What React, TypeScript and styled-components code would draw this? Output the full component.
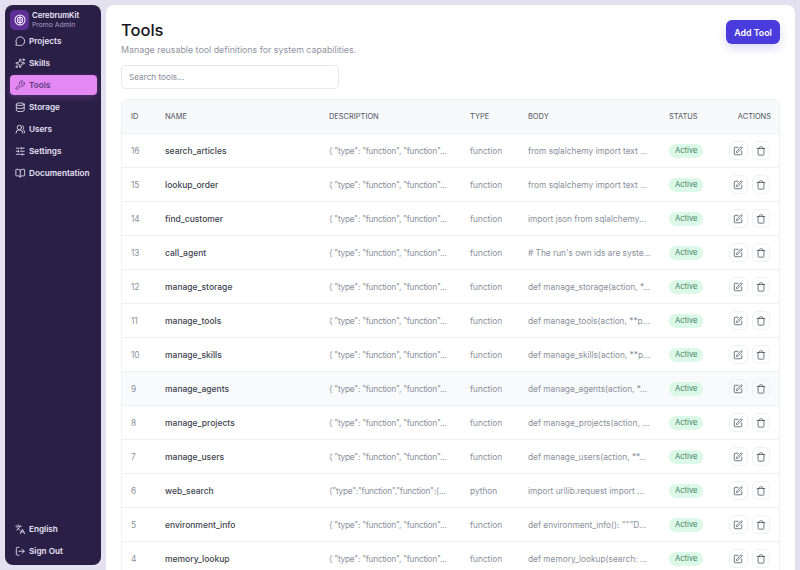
import React from 'react';
import styled, { createGlobalStyle } from 'styled-components';
import { MessageCircle, Sparkles, Wrench, Database, UsersRound, SlidersHorizontal, BookOpen, Languages, LogOut, SquarePen, Trash } from 'lucide-react';

const Global = createGlobalStyle`
  html, body { margin: 0; padding: 0; height: 570px; overflow: hidden; background: #e3e0f0; font-family: Inter, "Liberation Sans", sans-serif; }
  * { box-sizing: border-box; }
`;
const Shell = styled.div`display: flex; gap: 5px; padding: 5px; height: 570px; overflow: hidden;`;
const Sidebar = styled.aside`width: 96px; flex: none; height: 560px; background: #2a1f47; border-radius: 8px; padding: 5px 4px 4px 5px; display: flex; flex-direction: column;`;
const Brand = styled.div`display: flex; align-items: center; gap: 3px; height: 20px; margin-bottom: 1px;`;
const Logo = styled.div`width: 19px; height: 20px; border-radius: 5px; background: #5f2d96; color: #f3ecff; display: flex; align-items: center; justify-content: center;`;
const BrandText = styled.div`display: flex; flex-direction: column; line-height: 9px;`;
const BrandName = styled.span`font-size: 7.7px; font-weight: 600; color: #ece7f7;`;
const BrandSub = styled.span`font-size: 6.8px; color: #a99fc4;`;
const Nav = styled.nav`display: flex; flex-direction: column; gap: 2px;`;
const NavItem = styled.div<{ $active?: boolean }>`
  height: 20px; display: flex; align-items: center; gap: 3.5px; padding-left: 5px; border-radius: 4px; font-size: 8.2px; font-weight: 600;
  color: ${p => (p.$active ? '#5b3a78' : '#e6e1f2')};
  background: ${p => (p.$active ? '#e488f3' : 'transparent')};
  box-shadow: ${p => (p.$active ? '0 2px 6px rgba(227,133,240,.22)' : 'none')};
`;
const Spacer = styled.div`flex: 1;`;
const Main = styled.main`flex: 1; min-width: 0; height: 580px; background: #fff; border-radius: 8px 8px 0 0; padding: 15px 15px 0;`;
const Header = styled.div`display: flex; justify-content: space-between; align-items: flex-start;`;
const Title = styled.h1`margin: 0; font-size: 16.5px; line-height: 20px; font-weight: 500; color: #14141a;`;
const Subtitle = styled.p`margin: 3px 0 0; font-size: 8.85px; line-height: 13px; color: #8f94a0;`;
const AddButton = styled.button`width: 54px; height: 24px; border: 0; border-radius: 6px; background: #4a3bdc; color: #fff; font: 600 8.8px Inter, sans-serif; box-shadow: 0 4px 10px rgba(74,59,220,.2); padding: 0;`;
const Search = styled.input`display: block; width: 218px; height: 24px; margin-top: 9px; padding: 0 7px; border: 1px solid #e6e8ec; border-radius: 5px; font: 8.2px Inter, sans-serif; outline: none; &::placeholder { color: #868b96; }`;
const TableWrap = styled.div`margin-top: 10px; border: 1px solid #f0f1f4; border-radius: 6px 6px 0 0; overflow: hidden;`;
const Table = styled.table`width: 100%; border-collapse: collapse; table-layout: fixed;`;
const Th = styled.th<{ $w: number; $right?: boolean }>`
  width: ${p => p.$w}px; height: 33px; background: #f8f9fb; padding: 0 0 0 9px; font-size: 7.45px; font-weight: 400; color: #4f5663;
  text-align: ${p => (p.$right ? 'right' : 'left')}; padding-right: ${p => (p.$right ? '10px' : '0')};
`;
const Tr = styled.tr<{ $hover?: boolean }>`background: ${p => (p.$hover ? '#f9fafb' : '#fff')};`;
const Td = styled.td`height: 34px; border-top: 1px solid #eef0f3; padding: 1px 0 0 9px; font-size: 8.3px; color: #8b909b; white-space: nowrap; overflow: hidden;`;
const NameCell = styled(Td)`font-size: 8.5px; font-weight: 500; color: #40444f;`;
const DescCell = styled(Td)`letter-spacing: -0.25px;`;
const Badge = styled.span`display: inline-block; height: 14px; line-height: 14px; padding: 0 6px; border-radius: 7px; background: #dcf8e7; color: #3f7f66; font-size: 7.6px; font-weight: 400;`;
const Actions = styled.div`display: flex; justify-content: flex-end; gap: 4px; padding-right: 11px;`;
const IconBtn = styled.div`width: 19px; height: 19px; border: 1px solid #f0f1f4; border-radius: 6px; display: flex; align-items: center; justify-content: center; color: #565c68;`;

const LogoMark = () => (
  <svg width="12" height="12" viewBox="0 0 24 24" fill="none" stroke="currentColor" strokeWidth="2.2" strokeLinecap="round" strokeLinejoin="round">
    <circle cx="12" cy="12" r="10" />
    <path d="M12 3v18M12 8c-2-2-5-1-5 2 0 1 1 2 2 2-1 0-2 1-2 2 0 3 3 4 5 2M12 8c2-2 5-1 5 2 0 1-1 2-2 2 1 0 2 1 2 2 0 3-3 4-5 2" />
  </svg>
);

const nav = [
  ['Projects', MessageCircle], ['Skills', Sparkles], ['Tools', Wrench], ['Storage', Database],
  ['Users', UsersRound], ['Settings', SlidersHorizontal], ['Documentation', BookOpen],
] as const;

const d = '{ "type": "function", "function"...';
const rows = [
  [16, 'search_articles', d, 'function', 'from sqlalchemy import text ...'],
  [15, 'lookup_order', d, 'function', 'from sqlalchemy import text ...'],
  [14, 'find_customer', d, 'function', 'import json from sqlalchemy...'],
  [13, 'call_agent', d, 'function', "# The run's own ids are syste..."],
  [12, 'manage_storage', d, 'function', 'def manage_storage(action, *...'],
  [11, 'manage_tools', d, 'function', 'def manage_tools(action, **p...'],
  [10, 'manage_skills', d, 'function', 'def manage_skills(action, **p...'],
  [9, 'manage_agents', d, 'function', 'def manage_agents(action, *...'],
  [8, 'manage_projects', d, 'function', 'def manage_projects(action, ...'],
  [7, 'manage_users', d, 'function', 'def manage_users(action, **...'],
  [6, 'web_search', '{"type":"function","function":{...', 'python', 'import urllib.request import ...'],
  [5, 'environment_info', d, 'function', 'def environment_info(): """D...'],
  [4, 'memory_lookup', d, 'function', 'def memory_lookup(search: ...'],
] as const;

export default function App() {
  return (
    <>
      <Global />
      <Shell>
        <Sidebar>
          <Brand>
            <Logo><LogoMark /></Logo>
            <BrandText><BrandName>CerebrumKit</BrandName><BrandSub>Promo Admin</BrandSub></BrandText>
          </Brand>
          <Nav>
            {nav.map(([label, Icon]) => (
              <NavItem key={label} $active={label === 'Tools'}><Icon size={10.5} />{label}</NavItem>
            ))}
          </Nav>
          <Spacer />
          <Nav>
            <NavItem><Languages size={10.5} />English</NavItem>
            <NavItem><LogOut size={10.5} />Sign Out</NavItem>
          </Nav>
        </Sidebar>
        <Main>
          <Header>
            <div>
              <Title>Tools</Title>
              <Subtitle>Manage reusable tool definitions for system capabilities.</Subtitle>
            </div>
            <AddButton>Add Tool</AddButton>
          </Header>
          <Search placeholder="Search tools..." />
          <TableWrap>
            <Table>
              <thead>
                <tr>
                  <Th $w={34}>ID</Th><Th $w={164}>NAME</Th><Th $w={141}>DESCRIPTION</Th><Th $w={58}>TYPE</Th>
                  <Th $w={141}>BODY</Th><Th $w={60}>STATUS</Th><Th $w={61} $right>ACTIONS</Th>
                </tr>
              </thead>
              <tbody>
                {rows.map(r => (
                  <Tr key={r[0]} $hover={r[0] === 9}>
                    <Td>{r[0]}</Td><NameCell>{r[1]}</NameCell><DescCell>{r[2]}</DescCell><Td>{r[3]}</Td><Td>{r[4]}</Td>
                    <Td><Badge>Active</Badge></Td>
                    <Td><Actions><IconBtn><SquarePen size={10} /></IconBtn><IconBtn><Trash size={10} /></IconBtn></Actions></Td>
                  </Tr>
                ))}
              </tbody>
            </Table>
          </TableWrap>
        </Main>
      </Shell>
    </>
  );
}
